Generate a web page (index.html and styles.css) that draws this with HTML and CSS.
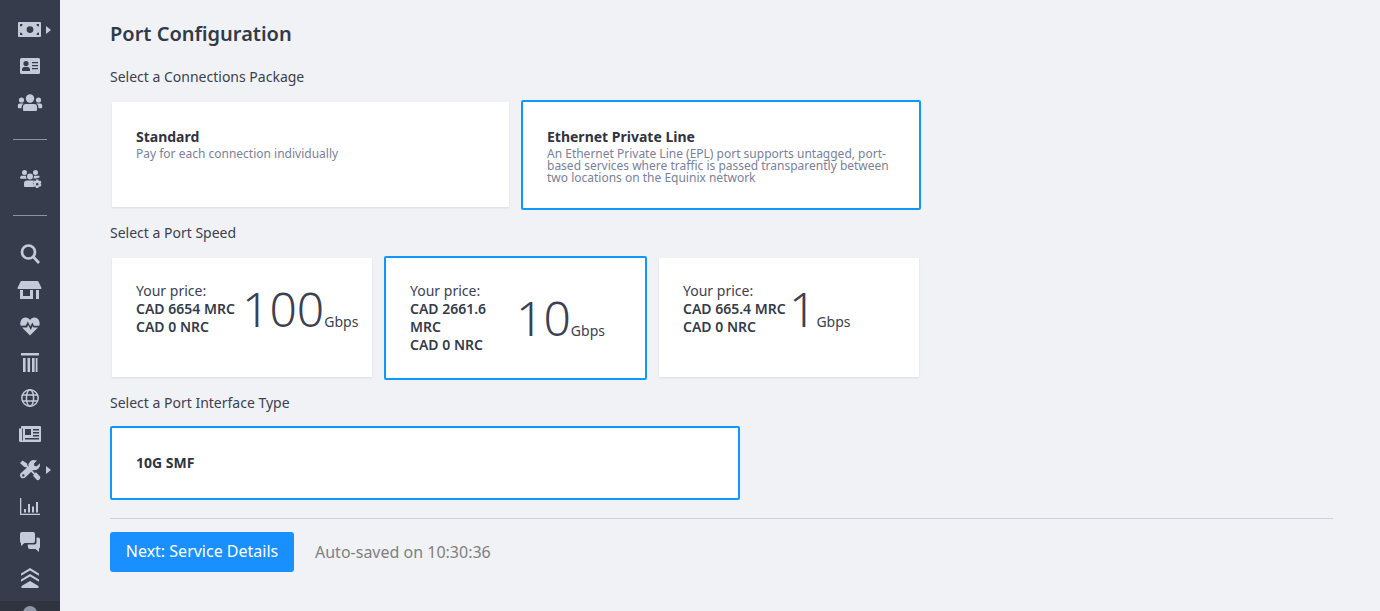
FILE: index.html
```html
<!DOCTYPE html>
<html lang="en">
<head>
<meta charset="utf-8">
<title>Port Configuration</title>
<link rel="stylesheet" href="styles.css">
</head>
<body>
<div class="app">
  <nav class="sidebar">
    <div class="nav-item has-caret"><svg viewBox="0 0 30 30"><path fill-rule="evenodd" d="M4 7h21a1 1 0 0 1 1 1v13a1 1 0 0 1-1 1H4a1 1 0 0 1-1-1V8a1 1 0 0 1 1-1zm11 4.2a3.4 3.4 0 1 0 0 6.800a3.400 3.400 0 0 0 0-6.800zM5 9v2.500A2.500 2.500 0 0 0 7.500 9zm19 0h-2.500a2.500 2.500 0 0 0 2.500 2.500zM5 20h2.500A2.500 2.500 0 0 0 5 17.500zm19 0v-2.500a2.500 2.500 0 0 0-2.500 2.500z"/></svg></div>
    <div class="nav-item"><svg viewBox="0 0 30 30"><path fill-rule="evenodd" d="M6.500 7h17A1.500 1.500 0 0 1 25 8.500v13a1.500 1.500 0 0 1-1.500 1.500h-17A1.500 1.500 0 0 1 5 21.500v-13A1.500 1.500 0 0 1 6.500 7zM11 10a2.600 2.600 0 1 0 0 5.200A2.600 2.600 0 0 0 11 10zm-1.800 6C8 16 7 17 7 18.300V20h8v-1.700C15 17 14 16 12.800 16zM17 11v1.300h6V11zm0 3v1.300h6V14zm0 3v1.300h6V17z"/></svg></div>
    <div class="nav-item"><svg viewBox="0 0 30 30"><circle cx="15" cy="11.500" r="4.200"/><circle cx="6.500" cy="13" r="2.600"/><circle cx="23.500" cy="13" r="2.600"/><path d="M11 17h8a3 3 0 0 1 3 3v3a1 1 0 0 1-1 1H9a1 1 0 0 1-1-1v-3a3 3 0 0 1 3-3zM4.800 16.500h3.700a5 5 0 0 0-2 4v.7H3.800a1 1 0 0 1-1-1v-1.700a2 2 0 0 1 2-2zM21.500 16.500h3.700a2 2 0 0 1 2 2v1.700a1 1 0 0 1-1 1h-2.700v-.7a5 5 0 0 0-2-4z"/></svg></div>
    <hr class="nav-rule first">
    <div class="nav-item tall"><svg viewBox="0 0 30 30"><circle cx="9.500" cy="9.500" r="2.500"/><circle cx="20.500" cy="9.500" r="2.500"/><circle cx="15" cy="13.500" r="3"/><path d="M6 12.800h5a4.500 4.500 0 0 0 .7 3H6.500c-1 0-1.500-.5-1.500-1.300zM19 12.800h5.500v1.600l-3.500 1.200h-2.700a4.500 4.500 0 0 0 .7-2.800zM12 17.500h6a2.500 2.500 0 0 1 .800.200a6 6 0 0 0 .5 6.300H10a1 1 0 0 1-1-1v-2.500a3 3 0 0 1 3-3z"/><path fill-rule="evenodd" d="M21 16.500h2.400l.4 1.500 1.500-.4 1.200 2-1 1.100 1 1.100-1.200 2-1.500-.4-.4 1.500H21l-.4-1.500-1.500.4-1.200-2 1-1.100-1-1.100 1.200-2 1.500.4zm1.200 3.400a1.300 1.300 0 1 0 0 2.600 1.300 1.300 0 0 0 0-2.600z"/></svg></div>
    <hr class="nav-rule second">
    <div class="nav-item"><svg viewBox="0 0 30 30"><circle class="line thick" cx="13.500" cy="13" r="6.500"/><path class="line thick" d="M18.500 18l5.500 6"/></svg></div>
    <div class="nav-item"><svg viewBox="0 0 30 30"><path fill-rule="evenodd" d="M6.500 6h16a1 1 0 0 1 .9.500L26.500 13a1 1 0 0 1-.9 1H3.400a1 1 0 0 1-.9-1l3.100-6.500a1 1 0 0 1 .9-.500zM5 15h13v9H5zm3 0v6h7v-6zM21 15h3v9h-3z"/></svg></div>
    <div class="nav-item"><svg viewBox="0 0 30 30"><path d="M15 24.500L7 16.500h5l1.200-2.400 2.500 5 2-4 .7 1.400H23zM5.700 14.800C4.300 11 6.700 6.500 10.500 6.500c2 0 3.500 1 4.500 2.500 1-1.500 2.500-2.500 4.500-2.500 3.800 0 6.200 4.500 4.800 8.300h-5.300l-1.700-3.300-2 4-2.500-5-2 4z"/></svg></div>
    <div class="nav-item"><svg viewBox="0 0 30 30"><path d="M6 6h18v2.600H6zM8 11h2.600v14H8zM12.500 11h2.600v14h-2.600zM17 11h2.600v14H17zM20.700 11h1.800v14h-1.800z"/></svg></div>
    <div class="nav-item"><svg viewBox="0 0 30 30"><g class="line"><circle cx="15" cy="15" r="8.200"/><ellipse cx="15" cy="15" rx="3.600" ry="8.200"/><path d="M7.500 12h15M7.500 18h15"/></g></svg></div>
    <div class="nav-item"><svg viewBox="0 0 30 30"><path fill-rule="evenodd" d="M7 7h18a1 1 0 0 1 1 1v14a1 1 0 0 1-1 1H5.500A1.500 1.500 0 0 1 4 21.500V9.500h2V8a1 1 0 0 1 1-1zM7.200 9.500v12h.8v-12zM10 10v6h6v-6zm8 0v1.500h6V10zm0 3v1.500h6V13zm0 3v1.500h6V16zm-8 3v1.500h14V19z"/></svg></div>
    <div class="nav-item has-caret"><svg viewBox="0 0 30 30"><path d="M5 8l2.500-2.500L12 8.500l.6 2.400 5.400 5.400 2 2 1-1 3.600 3.600a2.400 2.400 0 0 1-3.400 3.400L18 20.800l1-1-2-2-5.400-5.400L9 11.800z"/><path fill-rule="evenodd" d="M20 5.200a5.500 5.500 0 0 1 2 .2l-3 3 .4 2.500 2.500.4 3-3a5.500 5.500 0 0 1-6.800 6.700L10.500 22.200a3.100 3.100 0 1 1-4.300-4.400l7.300-6.600A5.500 5.500 0 0 1 20 5.200zM8.300 19.200a1.200 1.200 0 1 0 0 2.400 1.200 1.200 0 0 0 0-2.400z"/></svg></div>
    <div class="nav-item"><svg viewBox="0 0 30 30"><path d="M5 7h1.300v15.700H25V24H5z"/><path d="M9 18h2v3.500H9zM13 13h2v8.500h-2zM17 15.500h2v6h-2zM21 11h2v10.500h-2z"/></svg></div>
    <div class="nav-item"><svg viewBox="0 0 30 30"><path d="M7 5h11a2 2 0 0 1 2 2v7a2 2 0 0 1-2 2H9.500L6 19v-3a2 2 0 0 1-1-2V7a2 2 0 0 1 2-2z"/><path d="M21.500 10.500H23a2 2 0 0 1 2 2V20a2 2 0 0 1-1 1.500V25l-3.500-3H15a2 2 0 0 1-2-1.500l-.3-3h6.800a2 2 0 0 0 2-2z"/></svg></div>
    <div class="nav-item"><svg viewBox="0 0 30 30"><path d="M15 5l9 5.500v2.300l-9-5.300-9 5.300v-2.300zM15 11l9 5.500v2.300l-9-5.300-9 5.300v-2.300zM15 18l8.500 5v2h-17v-2z"/></svg></div>
    <div class="nav-foot"><span class="foot-dot"></span></div>
  </nav>

  <main class="content">
    <h1 class="page-title">Port Configuration</h1>

    <h2 class="field-label">Select a Connections Package</h2>
    <div class="row row-package">
      <div class="card package">
        <div class="card-title">Standard</div>
        <div class="card-desc">Pay for each connection individually</div>
      </div>
      <div class="card package selected">
        <div class="card-title">Ethernet Private Line</div>
        <div class="card-desc">An Ethernet Private Line (EPL) port supports untagged, port-based services where traffic is passed transparently between two locations on the Equinix network</div>
      </div>
    </div>

    <h2 class="field-label">Select a Port Speed</h2>
    <div class="row row-speed">
      <div class="card speed speed-100">
        <div class="price"><span>Your price:</span><b>CAD 6654 MRC</b><b>CAD 0 NRC</b></div>
        <div class="rate"><span class="rate-num">100</span><span class="rate-unit">Gbps</span></div>
      </div>
      <div class="card speed speed-10 selected">
        <div class="price"><span>Your price:</span><b>CAD 2661.6 MRC</b><b>CAD 0 NRC</b></div>
        <div class="rate"><span class="rate-num">10</span><span class="rate-unit">Gbps</span></div>
      </div>
      <div class="card speed speed-1">
        <div class="price"><span>Your price:</span><b>CAD 665.4 MRC</b><b>CAD 0 NRC</b></div>
        <div class="rate"><span class="rate-num">1</span><span class="rate-unit">Gbps</span></div>
      </div>
    </div>

    <h2 class="field-label">Select a Port Interface Type</h2>
    <div class="card interface selected"><div class="card-title">10G SMF</div></div>

    <hr class="divider">
    <div class="actions">
      <button class="next-btn" type="button">Next: Service Details</button>
      <span class="autosave">Auto-saved on 10:30:36</span>
    </div>
  </main>
</div>
</body>
</html>
```
FILE: styles.css
```css
* { box-sizing: border-box; }
html, body { margin: 0; height: 611px; overflow: hidden; }
body { background: #f0f2f6; font-family: "Noto Sans", "Open Sans", sans-serif; color: #3b4150; }
.app { display: flex; height: 611px; }

.sidebar { width: 60px; flex: none; height: 611px; overflow: hidden; background: #373c4d; padding-top: 12px; display: flex; flex-direction: column; align-items: center; }
.nav-item { position: relative; width: 60px; height: 36px; flex: none; display: flex; align-items: center; justify-content: center; }
.nav-item svg { width: 30px; height: 30px; fill: #c5cad8; }
.nav-item .line { fill: none; stroke: #c5cad8; stroke-width: 1.5; }
.nav-item .thick { stroke-width: 2.700; }
.nav-item.has-caret::after { content: ""; position: absolute; left: 45.500px; top: 14px; border-left: 5px solid #c5cad8; border-top: 4px solid transparent; border-bottom: 4px solid transparent; }
.nav-rule { width: 34px; height: 1px; border: 0; background: #8e92a0; margin: 0; flex: none; }
.nav-rule.first { margin-top: 19px; }
.nav-item.tall { margin-top: 20px; }
.nav-rule.second { margin-top: 19px; margin-bottom: 20px; }
.nav-foot { margin-top: 5px; width: 60px; height: 30px; flex: none; background: #30343f; display: flex; justify-content: center; padding-top: 5px; }
.foot-dot { width: 14px; height: 14px; border-radius: 50%; background: #8f95a5; }

.content { flex: 1; padding: 20px 47px 0 50px; }
.page-title { margin: 0 0 20px; font-size: 20px; line-height: 27px; font-weight: 600; color: #333a47; }
.field-label { margin: 13px 0 14px; font-size: 14px; line-height: 19px; font-weight: 400; color: #3b4150; }
.page-title + .field-label { margin-top: 0; }

.row { display: flex; }
.row-package { gap: 11px; }
.row-speed { gap: 10px; }

.card { background: #fff; box-shadow: 0 1px 2px rgba(30, 40, 70, .1); margin: 2px 2px 3px; padding: 24px; }
.card.selected { margin: 0; border: 2px solid #0d99ff; border-radius: 2px; box-shadow: none; }
.package { width: 397px; margin-right: 1px; }
.package.selected { width: 400px; }
.card-title { font-size: 14px; line-height: 21px; font-weight: 700; color: #2f3440; }
.card-desc { margin-top: 1px; font-size: 12px; line-height: 12px; color: #7a8199; }

.speed { width: 260px; display: flex; align-items: flex-start; padding: 24px; }
.speed.selected { width: 263px; }
.price { display: flex; flex-direction: column; flex: none; font-size: 14px; line-height: 18px; }
.price b { font-weight: 600; color: #353b49; }
.speed-100 .price { width: 99px; margin-right: 7px; white-space: nowrap; }
.speed-10 .price { width: 80px; margin-right: 26px; }
.speed-1 .price { width: 103px; margin-right: 3px; white-space: nowrap; }
.rate { display: flex; align-items: baseline; flex: none; }
.speed-10 .rate { margin-top: 9px; }
.rate-num { font-size: 48px; line-height: 54px; font-weight: 350; color: #3b4150; }
.rate-unit { font-size: 14px; line-height: 19px; color: #3b4150; }

.interface { width: 630px; height: 74px; }
.divider { height: 1px; border: 0; background: #cdd0d6; margin: 18px 0 13px; }
.actions { display: flex; align-items: center; gap: 21px; }
.next-btn { width: 184px; height: 40px; border: 0; border-radius: 3px; background: #1a90ff; color: #fff; font: 400 16px/22px "Noto Sans", sans-serif; padding: 0 0 2px; }
.autosave { font-size: 16px; color: #808080; }
```
